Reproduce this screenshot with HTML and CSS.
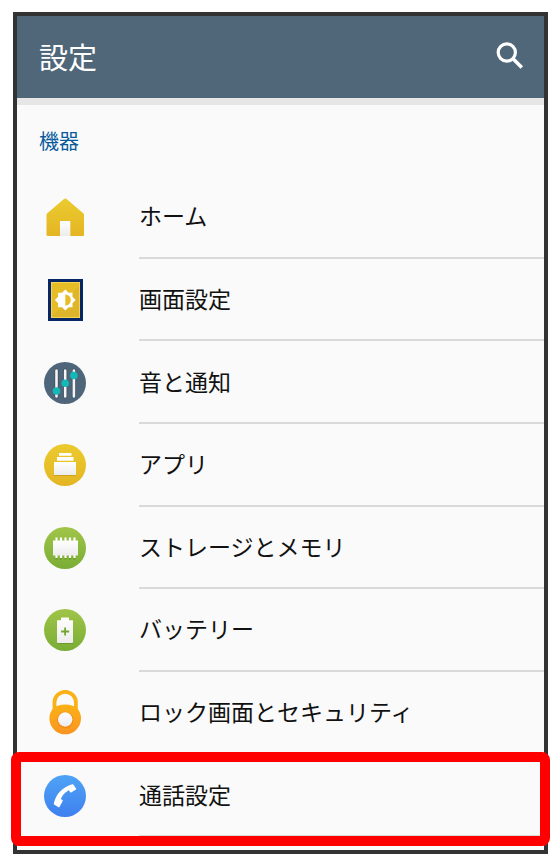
FILE: index.html
```
<!DOCTYPE html>
<html lang="ja">
<head>
    <meta charset="UTF-8">
    <meta name="viewport" content="width=device-width, initial-scale=1.0">
    <title>設定</title>
    <link rel="stylesheet" href="styles.css">
</head>
<body>
    <div class="screen">
        <header class="app-bar">
            <h1>設定</h1>
            <button class="search-btn" type="button" aria-label="検索">
                <svg viewBox="0 0 28 28" width="28" height="28" fill="none" stroke="#fff">
                    <circle cx="10.800" cy="10.500" r="8.600" stroke-width="3.200"/>
                    <path d="M16.800 16.500l9 9" stroke-width="3.600"/>
                </svg>
            </button>
        </header>

        <main class="content">
            <h2>機器</h2>
            <nav class="list">
                <a class="row" href="#home">
                    <svg class="icon" viewBox="0 0 42 42">
                        <defs>
                            <linearGradient id="yellow" x2="0" y2="1"><stop stop-color="#ebcb2e"/><stop offset="1" stop-color="#e4b524"/></linearGradient>
                            <linearGradient id="green" x2="0" y2="1"><stop stop-color="#a0c548"/><stop offset="1" stop-color="#7aad35"/></linearGradient>
                            <linearGradient id="orange" x2="0" y2="1"><stop stop-color="#fbb216"/><stop offset="1" stop-color="#fb9422"/></linearGradient>
                            <linearGradient id="blue" x2="0" y2="1"><stop stop-color="#4ea3f5"/><stop offset="1" stop-color="#3f80f0"/></linearGradient>
                            <linearGradient id="paper" x2="0" y2="1"><stop stop-color="#fff"/><stop offset="1" stop-color="#ececec"/></linearGradient>
                        </defs>
                        <path d="M16 25h10v15H16z" fill="url(#paper)"/>
                        <path d="M20 3q1.300-1 2.600 0L39.500 17.500q.5.500.5 1.500V39q0 1-1 1H26.300V25H16v15H4q-1.500 0-1.500-1V19q0-1 .5-1.500z" fill="url(#yellow)"/>
                    </svg>
                    <span class="label">ホーム</span>
                </a>
                <a class="row" href="#display">
                    <svg class="icon" viewBox="0 0 42 42">
                        <path d="M4 0h35v42H4z" fill="#082665"/>
                        <path d="M7 3h29v36H7z" fill="#f5d553"/>
                        <path d="M8 4h27v34H8z" fill="#e6bd27"/>
                        <path d="M8 38L35 7v31z" fill="#deb52b"/>
                        <path d="M21.300 10.500l3.200 3.200h4v4l3.200 3.300-3.200 3.300v4h-4l-3.200 3.200-3.200-3.200h-4v-4L10.900 21l3.200-3.300v-4h4z" fill="#fff"/>
                        <path d="M21.300 15.500a5.500 5.500 0 010 11z" fill="#e6bd27"/>
                    </svg>
                    <span class="label">画面設定</span>
                </a>
                <a class="row" href="#sound">
                    <svg class="icon" viewBox="0 0 42 42">
                        <circle cx="21" cy="21" r="21" fill="#4f667a"/>
                        <path d="M12.500 8.500v26M21.200 8.500v26M29.900 8.500v26" stroke="#3b4d5c" stroke-width="4" stroke-linecap="round"/>
                        <path d="M12.500 8.500v26M21.200 8.500v26M29.900 8.500v26" stroke="#f5f5f5" stroke-width="2.600" stroke-linecap="round"/>
                        <g fill="#12b9b7">
                            <circle cx="12.500" cy="29" r="3.800"/>
                            <circle cx="21.200" cy="21.200" r="3.800"/>
                            <circle cx="29.900" cy="13.500" r="3.800"/>
                        </g>
                    </svg>
                    <span class="label">音と通知</span>
                </a>
                <a class="row" href="#apps">
                    <svg class="icon" viewBox="0 0 42 42">
                        <circle cx="21" cy="21" r="21" fill="url(#yellow)"/>
                        <path d="M10 19h22v13H10z" fill="#cfa21e"/>
                        <path d="M10 18h22v13H10z" fill="url(#paper)"/>
                        <path d="M13 13h16.500v3.800H13zM15 9h12.500v2.800H15z" fill="#fff"/>
                    </svg>
                    <span class="label">アプリ</span>
                </a>
                <a class="row" href="#storage">
                    <svg class="icon" viewBox="0 0 42 42">
                        <circle cx="21" cy="21" r="21" fill="url(#green)"/>
                        <path d="M12.500 12v20.500M17 12v20.500M21.500 12v20.500M26 12v20.500M30.500 12v20.500" stroke="#6b9b2f" stroke-width="2.200"/>
                        <path d="M12.500 10.500v20.500M17 10.500v20.500M21.500 10.500v20.500M26 10.500v20.500M30.500 10.500v20.500" stroke="#fff" stroke-width="2.200"/>
                        <path d="M9 13.500h25v15H9z" fill="url(#paper)"/>
                    </svg>
                    <span class="label">ストレージとメモリ</span>
                </a>
                <a class="row" href="#battery">
                    <svg class="icon" viewBox="0 0 42 42">
                        <circle cx="21" cy="21" r="21" fill="url(#green)"/>
                        <path d="M13 14h16v21H13z" fill="#6b9b2f"/>
                        <path d="M17 8.500h8v2.800h3.500q.5 0 .5.500v21.500q0 .7-.7.700H13.700q-.7 0-.7-.7V11.800q0-.5.500-.5H17z" fill="url(#paper)"/>
                        <path d="M21.100 18.500v8M17.100 22.500h8" stroke="#74a52f" stroke-width="1.800"/>
                    </svg>
                    <span class="label">バッテリー</span>
                </a>
                <a class="row" href="#security">
                    <svg class="icon lock" viewBox="0 0 42 46">
                        <path d="M10.500 20v-7.500a10.700 10.700 0 0121.400 0V20" fill="none" stroke="#fbb216" stroke-width="3.800"/>
                        <path d="M21.200 14.500c5 0 9 1.500 11.800 3.500a15.800 15.800 0 11-23.600 0c2.800-2 6.800-3.500 11.800-3.500z" fill="url(#orange)"/>
                        <circle cx="21.200" cy="30" r="8.200" fill="#f28a16"/>
                        <circle cx="21.200" cy="29.500" r="7.200" fill="url(#paper)"/>
                    </svg>
                    <span class="label">ロック画面とセキュリティ</span>
                </a>
                <a class="row highlight" href="#call">
                    <svg class="icon" viewBox="0 0 42 42">
                        <circle cx="21" cy="21" r="21" fill="url(#blue)"/>
                        <path d="M29.300 9.500l2.900 4.200q.2.500-.3.900l-4.700 2.800q-.6.300-1-.2l-1.400-1.900q-5.700 3-8 8.600l1.700 1.200q.5.400.2 1l-3.200 5.900q-.4.600-1 .2l-4.400-2.700q-.5-.4-.3-1c2-9.300 8.500-16.500 18.500-19.300q.6-.2 1 .3z" fill="#fff"/>
                    </svg>
                    <span class="label">通話設定</span>
                </a>
            </nav>
        </main>
    </div>
</body>
</html>
```
FILE: styles.css
```
* {
    box-sizing: border-box;
}
body {
    font-family: 'Noto Sans CJK JP', sans-serif;
    margin: 0;
    background: #fff;
    color: #111;
    display: flex;
    min-height: 100vh;
    padding: 12px 12px 13px 13px;
}
.screen {
    flex: 1;
    display: flex;
    flex-direction: column;
    background: #fafafa;
    border: 4px solid #333;
}
.app-bar {
    display: flex;
    justify-content: space-between;
    align-items: center;
    height: 82px;
    padding: 0 20px 2px 22px;
    background: #50677a;
    color: #fff;
}
h1 {
    margin: 0;
    font-size: 29px;
    font-weight: 400;
    line-height: 40px;
}
.search-btn {
    display: flex;
    padding: 0;
    border: 0;
    background: none;
    cursor: pointer;
}
.content {
    flex: 1;
    display: flex;
    flex-direction: column;
    border-top: 7px solid #e6e6e6;
    padding-bottom: 13px;
}
h2 {
    margin: 0;
    padding: 21px 22px 20px;
    font-size: 20px;
    font-weight: 400;
    line-height: 30px;
    color: #085a9c;
}
.list {
    flex: 1;
    display: grid;
    grid-auto-rows: 1fr;
}
.row {
    position: relative;
    display: flex;
    align-items: center;
    gap: 53px;
    min-height: 64px;
    padding-left: 27px;
    color: inherit;
    text-decoration: none;
}
.icon {
    flex: none;
    width: 42px;
    height: 42px;
}
.icon.lock {
    height: 46px;
}
.label {
    flex: 1;
    align-self: stretch;
    display: flex;
    align-items: center;
    border-bottom: 2px solid #dadada;
    padding-bottom: 2px;
    font-size: 23px;
    line-height: 32px;
}
/* red frame around the item to tap */
.highlight::after {
    content: "";
    position: absolute;
    inset: -2px -6px -9px;
    border: 10px solid #f00;
    border-radius: 8px;
}
```
